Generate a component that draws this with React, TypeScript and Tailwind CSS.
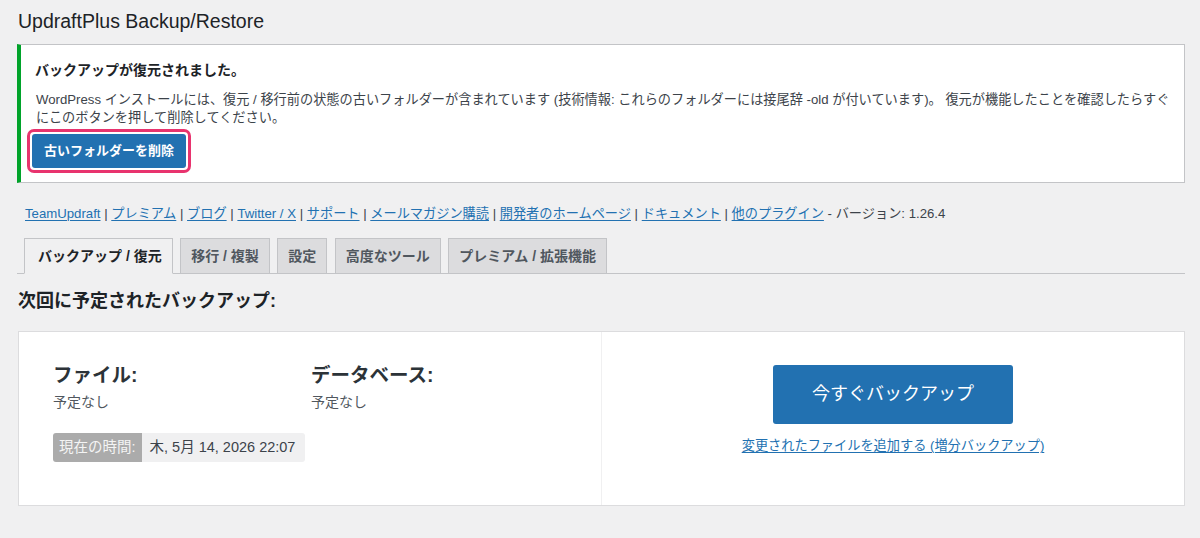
import React from "react";

const font = "font-['Liberation_Sans','Noto_Sans_CJK_JP',sans-serif]";

function Sep() {
  return <span className="text-[#3c434a]"> | </span>;
}

function L({ children }: { children: React.ReactNode }) {
  return <a className="text-[#2271b1] underline underline-offset-2 decoration-1">{children}</a>;
}

const links = [
  "TeamUpdraft",
  "プレミアム",
  "ブログ",
  "Twitter / X",
  "サポート",
  "メールマガジン購読",
  "開発者のホームページ",
  "ドキュメント",
  "他のプラグイン",
];

const tabs = ["移行 / 複製", "設定", "高度なツール", "プレミアム / 拡張機能"];

export default function App() {
  return (
    <div className={`${font} bg-[#f0f0f1] min-h-[538px] w-[1200px] pl-[17px] pr-[15px] pt-[8px] text-[#3c434a]`}>
      <h1 className="text-[19.5px] leading-[26px] text-[#1d2327] font-normal pl-[1px]">UpdraftPlus Backup/Restore</h1>

      {/* Notice */}
      <div className="mt-[10px] bg-white border border-[#c3c4c7] border-l-[4px] border-l-[#00a32a] pl-[14px] pr-[12px] pt-[15px] pb-[9px]">
        <p className="text-[14px] leading-[20px] font-bold text-[#1d2327]">バックアップが復元されました。</p>
        <div className="mt-[11px] text-[13.2px] leading-[17.5px] text-[#3c434a] pl-[1px]">
          <div className="whitespace-nowrap">
            WordPress インストールには、復元 / 移行前の状態の古いフォルダーが含まれています (技術情報: これらのフォルダーには接尾辞 -old が付いています)。 復元が機能したことを確認したらすぐ
          </div>
          <div className="whitespace-nowrap">にこのボタンを押して削除してください。</div>
        </div>
        <div className="mt-[3px] -ml-[8px] flex w-fit border-[3px] border-[#e8336e] rounded-[7px] p-[2px]">
          <button className="h-[34px] w-[154px] bg-[#2271b1] rounded-[3px] text-white text-[13px] font-bold leading-[34px] text-center">
            古いフォルダーを削除
          </button>
        </div>
      </div>

      {/* Links */}
      <div className="mt-[21px] pl-[8px] text-[13.2px] leading-[20px] whitespace-nowrap">
        {links.map((l, i) => (
          <React.Fragment key={l}>
            {i > 0 && <Sep />}
            <L>{l}</L>
          </React.Fragment>
        ))}
        <span className="text-[#3c434a]"> - バージョン: 1.26.4</span>
      </div>

      {/* Tabs */}
      <div className="mt-[14px] flex items-end border-b border-[#c3c4c7] pl-[7px]">
        <div className="-mb-px h-[36px] border border-[#c3c4c7] border-b-[#f0f0f1] bg-[#f0f0f1] pl-[13px] pr-[10px] text-[14px] font-bold leading-[34px] text-[#1d2327]">
          バックアップ / 復元
        </div>
        {tabs.map((t) => (
          <div
            key={t}
            className="-mb-px ml-[7.5px] h-[36px] border border-[#c3c4c7] bg-[#dcdcde] px-[10px] text-[14px] font-bold leading-[34px] text-[#50575e]"
          >
            {t}
          </div>
        ))}
      </div>

      <h2 className="mt-[15px] text-[18px] leading-[24px] font-bold text-[#1d2327] pl-[1px]">次回に予定されたバックアップ:</h2>

      {/* Card */}
      <div className="mt-[18px] ml-[1px] h-[175px] bg-white border border-[#dcdcde] flex">
        <div className="w-[583px] border-r border-[#f0f0f1] pl-[34px] pt-[30px]">
          <div className="flex">
            <div className="w-[258px]">
              <div className="text-[19.5px] leading-[26px] font-bold text-[#2c3338]">ファイル:</div>
              <div className="mt-[4px] text-[14px] leading-[20px] text-[#50575e]">予定なし</div>
            </div>
            <div>
              <div className="text-[19.5px] leading-[26px] font-bold text-[#2c3338]">データベース:</div>
              <div className="mt-[4px] text-[14px] leading-[20px] text-[#50575e]">予定なし</div>
            </div>
          </div>
          <div className="mt-[21px] inline-flex h-[29px] rounded-[3px] overflow-hidden text-[14.5px] leading-[29px]">
            <span className="bg-[#ababab] text-[#f4f4f4] pl-[6px] pr-[6px]">現在の時間:</span>
            <span className="bg-[#f0f0f1] text-[#3c434a] pl-[8px] pr-[10px]">木, 5月 14, 2026 22:07</span>
          </div>
        </div>
        <div className="flex-1 flex flex-col items-center pt-[33px]">
          <button className="w-[240px] h-[59px] bg-[#2271b1] rounded-[3px] text-white text-[18px] leading-[59px]">
            今すぐバックアップ
          </button>
          <a className="mt-[12px] text-[13.2px] leading-[20px] text-[#2271b1] underline underline-offset-2 decoration-1">
            変更されたファイルを追加する (増分バックアップ)
          </a>
        </div>
      </div>
    </div>
  );
}
